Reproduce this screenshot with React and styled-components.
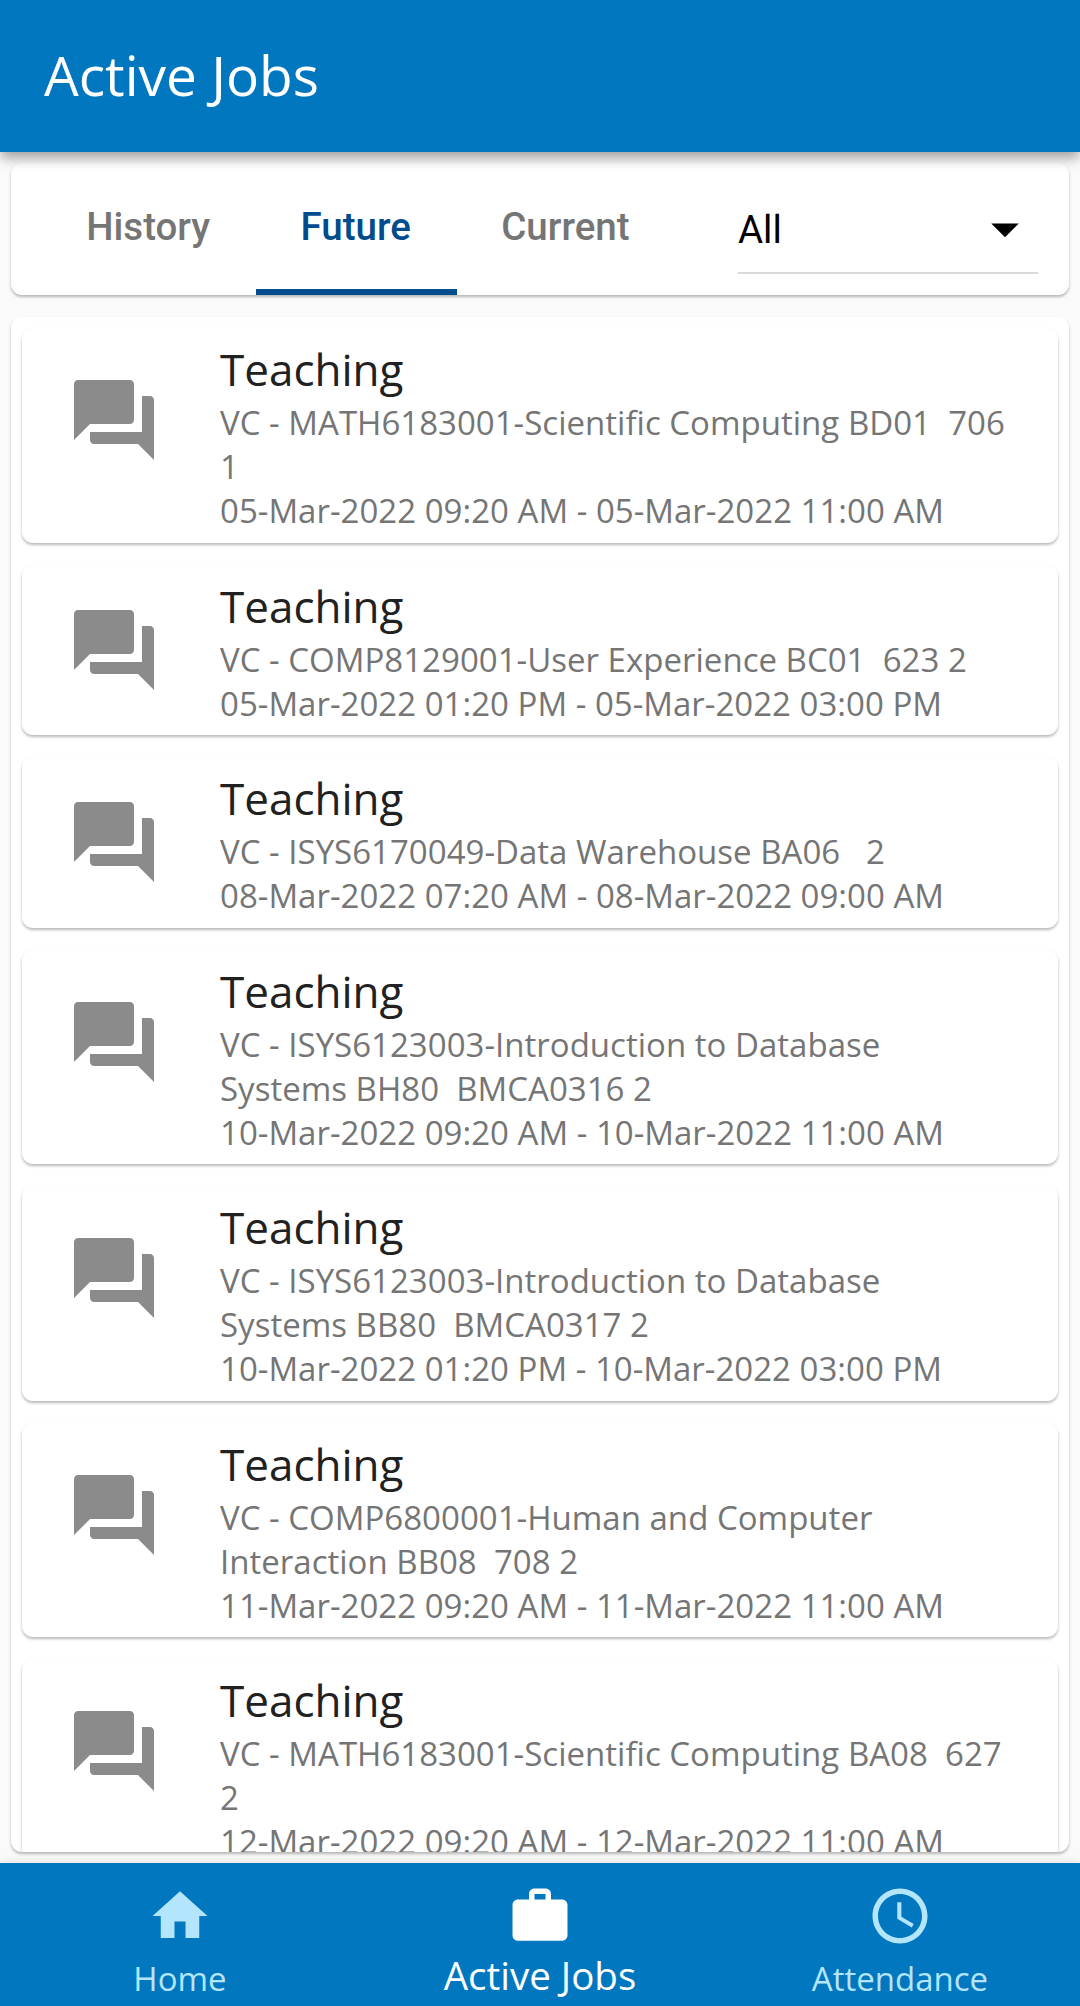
import React, { useState } from "react";
import styled, { createGlobalStyle } from "styled-components";
import {
  MdAccessTime,
  MdArrowDropDown,
  MdForum,
  MdHome,
  MdWork,
} from "react-icons/md";

const jobs = [
  {
    id: 1,
    detail: "VC - MATH6183001-Scientific Computing BD01  706 1",
    time: "05-Mar-2022 09:20 AM - 05-Mar-2022 11:00 AM",
    long: true,
  },
  {
    id: 2,
    detail: "VC - COMP8129001-User Experience BC01  623 2",
    time: "05-Mar-2022 01:20 PM - 05-Mar-2022 03:00 PM",
  },
  {
    id: 3,
    detail: "VC - ISYS6170049-Data Warehouse BA06   2",
    time: "08-Mar-2022 07:20 AM - 08-Mar-2022 09:00 AM",
  },
  {
    id: 4,
    detail: "VC - ISYS6123003-Introduction to Database Systems BH80  BMCA0316 2",
    time: "10-Mar-2022 09:20 AM - 10-Mar-2022 11:00 AM",
    long: true,
  },
  {
    id: 5,
    detail: "VC - ISYS6123003-Introduction to Database Systems BB80  BMCA0317 2",
    time: "10-Mar-2022 01:20 PM - 10-Mar-2022 03:00 PM",
    long: true,
  },
  {
    id: 6,
    detail: "VC - COMP6800001-Human and Computer Interaction BB08  708 2",
    time: "11-Mar-2022 09:20 AM - 11-Mar-2022 11:00 AM",
    long: true,
  },
  {
    id: 7,
    detail: "VC - MATH6183001-Scientific Computing BA08  627 2",
    time: "12-Mar-2022 09:20 AM - 12-Mar-2022 11:00 AM",
    long: true,
  },
];

const tabs = ["History", "Future", "Current"];

const navItems = [
  { label: "Home", icon: MdHome },
  { label: "Active Jobs", icon: MdWork },
  { label: "Attendance", icon: MdAccessTime },
];

function App() {
  const [tab, setTab] = useState("Future");
  const [page, setPage] = useState("Active Jobs");

  return (
    <Screen>
      <GlobalStyle />
      <Header>
        <Title>Active Jobs</Title>
      </Header>
      <FilterCard>
        <Tabs>
          {tabs.map((name) => (
            <Tab key={name} $active={name === tab} onClick={() => setTab(name)}>
              {name}
            </Tab>
          ))}
        </Tabs>
        <Select>
          <span>All</span>
          <MdArrowDropDown size={66} />
        </Select>
      </FilterCard>
      <JobList>
        {jobs.map((job) => (
          <JobCard key={job.id}>
            <JobIcon $long={job.long}>
              <MdForum size={96} />
            </JobIcon>
            <JobText>
              <JobTitle>Teaching</JobTitle>
              <JobLine>{job.detail}</JobLine>
              <JobLine>{job.time}</JobLine>
            </JobText>
          </JobCard>
        ))}
      </JobList>
      <BottomNav>
        {navItems.map(({ label, icon: Icon }) => (
          <NavItem
            key={label}
            $active={label === page}
            onClick={() => setPage(label)}
          >
            <Icon size={66} />
            <NavLabel $active={label === page}>{label}</NavLabel>
          </NavItem>
        ))}
      </BottomNav>
    </Screen>
  );
}

export default App;

const GlobalStyle = createGlobalStyle`
  * {
    box-sizing: border-box;
  }

  body {
    margin: 0;
    background-color: #fafafa;
    font-family: "Open Sans", sans-serif;
  }
`;

const Screen = styled.div`
  display: flex;
  flex-direction: column;
  height: 2006px;
  overflow: hidden;
  background-color: #fafafa;
`;

const Header = styled.header`
  display: flex;
  flex: none;
  align-items: center;
  height: 152px;
  padding: 0 44px 4px;
  background-color: #0077be;
  box-shadow: 0 7px 12px -1px rgba(0, 0, 0, 0.36);
  z-index: 1;
`;

const Title = styled.h1`
  margin: 0;
  color: #fff;
  font-size: 55px;
  font-weight: 400;
`;

const FilterCard = styled.div`
  display: flex;
  flex: none;
  justify-content: space-between;
  height: 132px;
  margin: 11px 11px 0;
  padding: 0 31px;
  border-radius: 11px;
  background-color: #fff;
  box-shadow: 0 2px 3px rgba(0, 0, 0, 0.28);
`;

const Tabs = styled.div`
  display: flex;
`;

const Tab = styled.button`
  padding: 0 46.2px 0 44.2px;
  border: none;
  border-top: 1px solid transparent;
  border-bottom: 6px solid
    ${(props) => (props.$active ? "#004c8c" : "transparent")};
  background-color: transparent;
  color: ${(props) => (props.$active ? "#004c8c" : "#757575")};
  font-family: Roboto, sans-serif;
  font-size: 38.5px;
  font-weight: 500;
`;

const Select = styled.div`
  display: flex;
  align-items: center;
  justify-content: space-between;
  width: 300px;
  height: 88px;
  margin-top: 23px;
  border-bottom: 2px solid #dadada;
  font-family: Roboto, sans-serif;
  font-size: 38.5px;
`;

const JobList = styled.div`
  flex: 1;
  min-height: 0;
  margin: 22px 11px 11px;
  padding: 11px;
  overflow: hidden;
  border-radius: 11px;
  background-color: #fff;
  box-shadow: 0 2px 3px rgba(0, 0, 0, 0.28);
`;

const JobCard = styled.div`
  display: flex;
  margin-bottom: 22px;
  padding: 12px 44px 9.5px;
  border-radius: 11px;
  box-shadow: 0 2px 3px rgba(0, 0, 0, 0.28);
`;

const JobIcon = styled.div`
  width: 154px;
  padding-top: ${(props) => (props.$long ? "32px" : "25px")};
  color: #8b8b8b;
`;

const JobText = styled.div`
  flex: 1;
`;

const JobTitle = styled.div`
  padding-bottom: 3px;
  color: #212121;
  font-size: 44px;
  line-height: 58px;
`;

const JobLine = styled.div`
  color: #757575;
  font-size: 33px;
  letter-spacing: 0.015px;
  line-height: 44px;
  white-space: pre-wrap;
`;

const BottomNav = styled.nav`
  display: flex;
  flex: none;
  height: 143px;
  background-color: #0077be;
  box-shadow: 0 0 10px rgba(0, 0, 0, 0.12);
`;

const NavItem = styled.button`
  display: flex;
  flex: 1;
  flex-direction: column;
  align-items: center;
  padding: 20px 0 0;
  border: none;
  background-color: transparent;
  color: ${(props) => (props.$active ? "#fff" : "#b3e5fc")};
`;

const NavLabel = styled.span`
  height: 52px;
  font-family: "Open Sans", sans-serif;
  font-size: ${(props) => (props.$active ? "38.5px" : "33px")};
  line-height: ${(props) => (props.$active ? "52px" : "59px")};
`;
